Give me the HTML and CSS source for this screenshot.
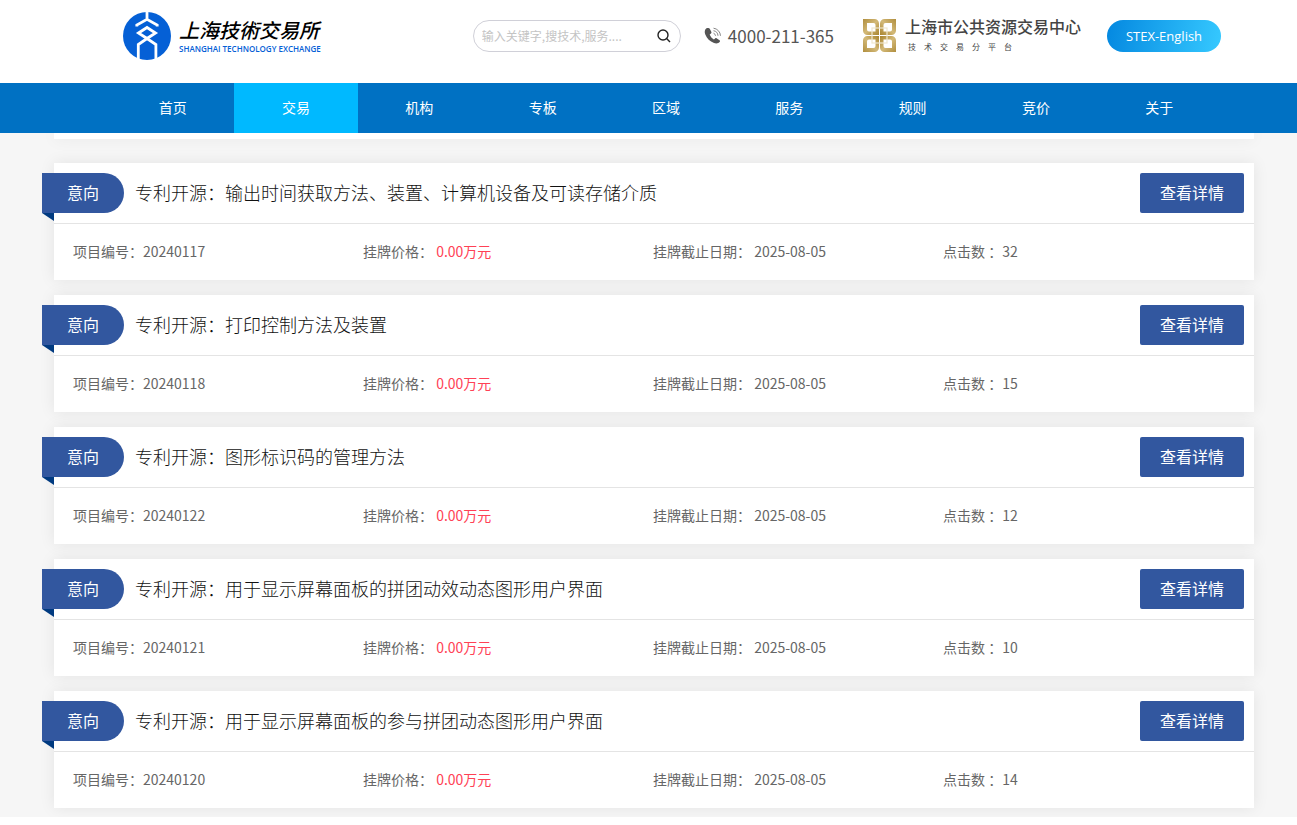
FILE: index.html
```html
<!DOCTYPE html>
<html lang="zh-CN">
<head>
<meta charset="utf-8">
<title>上海技术交易所</title>
<link rel="stylesheet" href="styles.css">
</head>
<body>
<header class="header">
  <a class="logo" href="#">
    <svg class="logo-mark" viewBox="0 0 48 48" aria-hidden="true">
      <circle cx="24" cy="24" r="24" fill="#0560d6"/>
      <g fill="none" stroke="#fff" stroke-width="2.800">
        <path d="M24 0v8M13.800 14.500V13L24 7.300 34.200 13v1.500"/>
        <path d="M15.500 21L24 15.500l8.500 5.500L24 26.500z"/>
        <path d="M15.300 48V32.500L24 26.500l8.900 6V48"/>
      </g>
    </svg>
    <span class="logo-text">
      <span class="logo-cn">上海技術交易所</span>
      <span class="logo-en">SHANGHAI TECHNOLOGY EXCHANGE</span>
    </span>
  </a>
  <form class="search">
    <input class="search-input" type="text" aria-label="搜索" placeholder="输入关键字,搜技术,服务....">
    <button class="search-button" type="button" aria-label="搜索">
      <svg viewBox="0 0 14 14" width="14" height="14" fill="none" stroke="#222" stroke-width="1.400"><circle cx="6" cy="6" r="5"/><path d="M9.600 9.600L13 13"/></svg>
    </button>
  </form>
  <div class="phone">
    <svg viewBox="0 0 18 18" width="18" height="18" aria-hidden="true">
      <path fill="#555" d="M2.200 1.500C.700 2.700.300 5 1.300 7.500c1.500 4 4.700 7 8.700 8.500 2.300.9 4.500.5 5.800-1.200.4-.6.300-1.200-.3-1.600l-2.900-1.900c-.5-.4-1.100-.3-1.500.1l-1.200 1.100C8 11.500 6.500 9.800 5.700 7.500l1.300-1c.5-.3.600-.9.400-1.400L5.900 1.900c-.3-.6-.9-.8-1.500-.8-.8-.1-1.600 0-2.200.4z"/>
      <g fill="none" stroke="#888" stroke-width="1"><path d="M9.500 6.200a3 3 0 0 1 2 2.600M9.500 3.700a5.500 5.500 0 0 1 4.500 5.100M9.500 1.200a8 8 0 0 1 7 7.600"/></g>
    </svg>
    <span>4000-211-365</span>
  </div>
  <a class="center" href="#">
    <svg class="center-mark" viewBox="0 0 34 34" aria-hidden="true">
      <defs>
        <linearGradient id="gold" x1="0" y1="0" x2="1" y2="1"><stop offset="0" stop-color="#b08e3e"/><stop offset=".5" stop-color="#d3b978"/><stop offset="1" stop-color="#a8842f"/></linearGradient>
        <path id="petal" d="M0 0h11.500a4.500 4.500 0 0 1 4.500 4.500V16H4.500A4.500 4.500 0 0 1 0 11.500zM4 4v6.500a2 2 0 0 0 2 2h6.500V6a2 2 0 0 0-2-2z" fill-rule="evenodd"/>
      </defs>
      <g fill="url(#gold)">
        <use href="#petal"/>
        <use href="#petal" transform="matrix(-1 0 0 1 33 0)"/>
        <use href="#petal" transform="matrix(1 0 0 -1 0 33)"/>
        <use href="#petal" transform="matrix(-1 0 0 -1 33 33)"/>
      </g>
      <rect x="9" y="9" width="15" height="15" fill="none" stroke="#efe6cd" stroke-width="1.200"/>
    </svg>
    <span class="center-text">
      <span class="center-name">上海市公共资源交易中心</span>
      <span class="center-sub">技术交易分平台</span>
    </span>
  </a>
  <a class="english" href="#">STEX-English</a>
</header>
<nav class="nav">
  <a href="#">首页</a>
  <a class="active" href="#">交易</a>
  <a href="#">机构</a>
  <a href="#">专板</a>
  <a href="#">区域</a>
  <a href="#">服务</a>
  <a href="#">规则</a>
  <a href="#">竞价</a>
  <a href="#">关于</a>
</nav>
<main class="list">
  <div class="card-end"></div>
  <article class="card">
    <div class="card-head"><span class="badge">意向</span><h2>专利开源：输出时间获取方法、装置、计算机设备及可读存储介质</h2><button type="button">查看详情</button></div>
    <div class="card-info"><span>项目编号：20240117</span><span>挂牌价格： <em>0.00万元</em></span><span>挂牌截止日期： 2025-08-05</span><span>点击数 ：32</span></div>
  </article>
  <article class="card">
    <div class="card-head"><span class="badge">意向</span><h2>专利开源：打印控制方法及装置</h2><button type="button">查看详情</button></div>
    <div class="card-info"><span>项目编号：20240118</span><span>挂牌价格： <em>0.00万元</em></span><span>挂牌截止日期： 2025-08-05</span><span>点击数 ：15</span></div>
  </article>
  <article class="card">
    <div class="card-head"><span class="badge">意向</span><h2>专利开源：图形标识码的管理方法</h2><button type="button">查看详情</button></div>
    <div class="card-info"><span>项目编号：20240122</span><span>挂牌价格： <em>0.00万元</em></span><span>挂牌截止日期： 2025-08-05</span><span>点击数 ：12</span></div>
  </article>
  <article class="card">
    <div class="card-head"><span class="badge">意向</span><h2>专利开源：用于显示屏幕面板的拼团动效动态图形用户界面</h2><button type="button">查看详情</button></div>
    <div class="card-info"><span>项目编号：20240121</span><span>挂牌价格： <em>0.00万元</em></span><span>挂牌截止日期： 2025-08-05</span><span>点击数 ：10</span></div>
  </article>
  <article class="card">
    <div class="card-head"><span class="badge">意向</span><h2>专利开源：用于显示屏幕面板的参与拼团动态图形用户界面</h2><button type="button">查看详情</button></div>
    <div class="card-info"><span>项目编号：20240120</span><span>挂牌价格： <em>0.00万元</em></span><span>挂牌截止日期： 2025-08-05</span><span>点击数 ：14</span></div>
  </article>
</main>
</body>
</html>
```
FILE: styles.css
```css
* { box-sizing: border-box; }
body {
  margin: 0;
  background: #fff;
  color: #666;
  font: 14px/20px "Noto Sans CJK SC", sans-serif;
}
a { color: inherit; text-decoration: none; }
button, input { font: inherit; }
svg { display: block; flex: none; }

.header {
  display: flex;
  align-items: center;
  height: 83px;
  padding: 0 76px 11px 123px;
}
.logo { display: flex; align-items: center; gap: 8px; }
.logo-mark { width: 48px; height: 48px; }
.logo-text, .center-text { display: flex; flex-direction: column; white-space: nowrap; }
.logo-cn {
  color: #000;
  font-size: 20px;
  font-style: italic;
  font-weight: 500;
  line-height: 26px;
}
.logo-en {
  color: #0560d6;
  font: 600 8px/12px "Open Sans", sans-serif;
}
.search {
  display: flex;
  align-items: center;
  width: 208px;
  height: 32px;
  margin-left: auto;
  border: 1px solid #d0d0d8;
  border-radius: 16px;
}
.search-input {
  flex: 1;
  min-width: 0;
  padding: 0 8px;
  border: 0;
  outline: 0;
  background: none;
  font-size: 12px;
}
.search-input::placeholder { color: #c4c4c4; }
.search-button { padding: 0 9px; border: 0; background: none; }
.phone {
  display: flex;
  align-items: center;
  gap: 6px;
  margin-left: 23px;
  color: #555;
  font-size: 17px;
}
.center { display: flex; align-items: center; gap: 8px; margin-left: 29px; }
.center-mark { width: 34px; height: 34px; }
.center-name {
  color: #444;
  font: 500 16px/22px "Liberation Serif", "Noto Sans CJK SC", serif;
}
.center-sub {
  padding-left: 3px;
  color: #444;
  font-size: 8px;
  line-height: 16px;
  letter-spacing: 8px;
}
.english {
  width: 114px;
  margin-left: 26px;
  border-radius: 16px;
  background: linear-gradient(100deg, #0488e0, #36c9ff);
  color: #fff;
  font: 13px/32px "Open Sans", sans-serif;
  text-align: center;
}

.nav {
  display: flex;
  padding: 0 76px 0 111px;
  background: #0071c3;
  color: #fff;
  line-height: 48px;
  text-align: center;
}
.nav a { flex: 1; padding-bottom: 2px; }
.nav .active { background: #00b9ff; }

.list {
  display: flex;
  flex-direction: column;
  gap: 15px;
  padding: 0 43px 9px 54px;
  background: #f6f6f6;
  overflow: hidden;
}
.card, .card-end {
  background: #fff;
  box-shadow: 0 0 15px rgba(0, 0, 0, .08);
}
.card-end { height: 6px; margin-bottom: 9px; }
.card-head {
  display: flex;
  align-items: center;
  height: 61px;
  padding-right: 10px;
  border-bottom: 1px solid #e4e4e4;
}
.badge {
  position: relative;
  width: 82px;
  padding-bottom: 2px;
  margin-left: -12px;
  border-radius: 0 20px 20px 0;
  background: #32579f;
  color: #fff;
  font-size: 16px;
  line-height: 38px;
  text-align: center;
}
.badge::after {
  content: "";
  position: absolute;
  top: 100%;
  left: 0;
  border-top: 8px solid #003a80;
  border-left: 12px solid transparent;
}
.card h2 {
  flex: 1;
  margin: 0 11px;
  padding-bottom: 2px;
  color: #111;
  font-size: 18px;
  font-weight: 300;
}
.card button {
  width: 104px;
  height: 40px;
  padding: 0 0 2px;
  border: 0;
  border-radius: 2px;
  background: #32579f;
  color: #fff;
  font-size: 16px;
}
.card-info {
  display: grid;
  grid-template-columns: repeat(4, 1fr);
  padding: 17px 21px 19px 19px;
}
.card-info em { color: #ff4155; font-style: normal; }
```
